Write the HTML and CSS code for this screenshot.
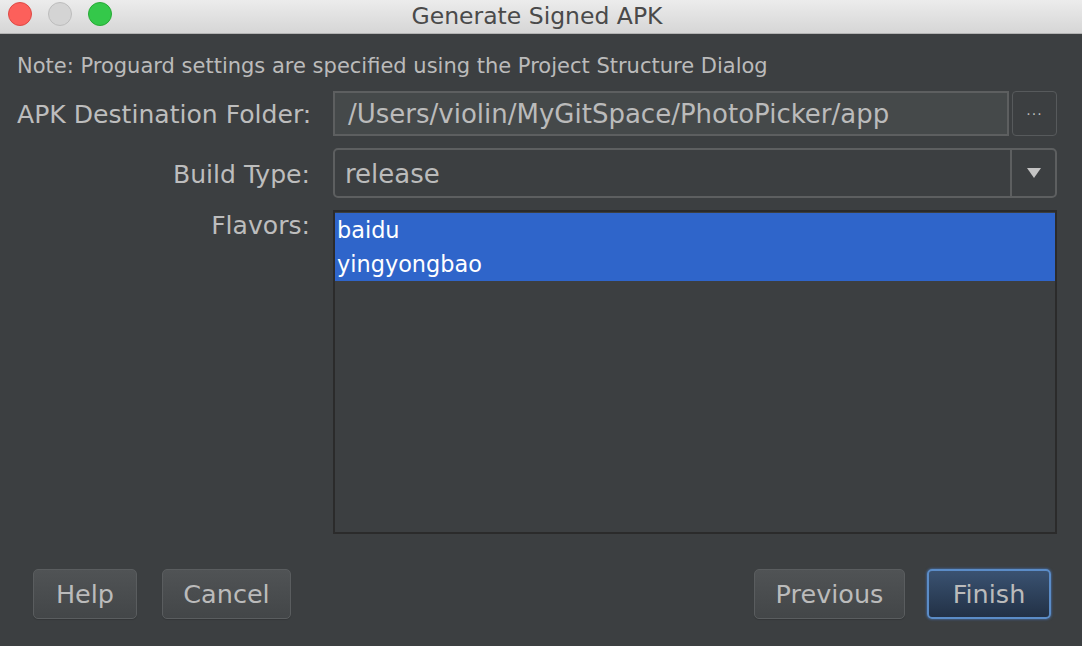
FILE: index.html
```html
<!DOCTYPE html>
<html>
<head>
<meta charset="utf-8">
<link rel="stylesheet" href="styles.css">
</head>
<body>
<div class="window">
  <div class="titlebar">
    <div class="lights">
      <span class="light red"></span>
      <span class="light gray"></span>
      <span class="light green"></span>
    </div>
    <div class="title">Generate Signed APK</div>
  </div>
  <div class="content">
    <div class="note">Note: Proguard settings are specified using the Project Structure Dialog</div>
    <div class="form">
      <label class="label">APK Destination Folder:</label>
      <div class="pathrow">
        <div class="textfield">/Users/violin/MyGitSpace/PhotoPicker/app</div>
        <div class="browse">&middot;&middot;&middot;</div>
      </div>
      <label class="label">Build Type:</label>
      <div class="combo">
        <div class="combo-value">release</div>
        <div class="combo-arrow"><svg width="16" height="12" viewBox="0 0 16 12"><path d="M1 1 H15 L8 11 Z" fill="#c4c4c4"/></svg></div>
      </div>
      <label class="label label-top">Flavors:</label>
      <div class="list">
        <div class="item sel">baidu</div>
        <div class="item sel">yingyongbao</div>
      </div>
    </div>
    <div class="buttons">
      <div class="group">
        <button class="btn help">Help</button>
        <button class="btn cancel">Cancel</button>
      </div>
      <div class="group right">
        <button class="btn prev">Previous</button>
        <button class="btn finish">Finish</button>
      </div>
    </div>
  </div>
</div>
</body>
</html>
```
FILE: styles.css
```css
html, body {
  margin: 0;
  padding: 0;
}
body {
  width: 1082px;
  height: 646px;
  overflow: hidden;
  background: #3c3f41;
  font-family: "DejaVu Sans", "Liberation Sans", sans-serif;
  color: #bbbbbb;
}
.window {
  display: flex;
  flex-direction: column;
  height: 646px;
}
.titlebar {
  height: 34px;
  flex: none;
  background: linear-gradient(#ececec, #d6d6d6);
  border-bottom: 1px solid #b3b3b3;
  box-sizing: border-box;
  position: relative;
  display: flex;
  align-items: center;
  justify-content: center;
}
.lights {
  position: absolute;
  left: 8px;
  top: 2px;
  display: flex;
  gap: 16px;
}
.light {
  width: 24px;
  height: 24px;
  border-radius: 50%;
  box-sizing: border-box;
}
.red { background: #fc605b; border: 1px solid #de4a45; }
.gray { background: #d4d4d4; border: 1px solid #bdbdbd; }
.green { background: #34c84a; border: 1px solid #27aa35; }
.title {
  font-size: 23.5px;
  color: #4a4a4a;
  margin-top: -2px;
  margin-left: -8px;
}
.content {
  flex: 1;
  padding: 0 25px 0 17px;
  display: flex;
  flex-direction: column;
}
.note {
  font-size: 21px;
  line-height: 24px;
  margin-top: 20px;
  color: #bbbbbb;
  white-space: nowrap;
}
.form {
  margin-top: 13px;
  display: grid;
  grid-template-columns: 293px 1fr;
  column-gap: 23px;
  row-gap: 12px;
  align-items: center;
}
.label {
  font-size: 25.1px;
  text-align: right;
  color: #bdbdbd;
  white-space: nowrap;
  margin-top: 2px;
}
.label-top {
  align-self: start;
  line-height: 30px;
  margin-top: 1px;
}
.pathrow {
  display: flex;
  gap: 3px;
  height: 45px;
}
.textfield {
  flex: 1;
  background: #45494a;
  border: 2px solid #5d5f60;
  box-sizing: border-box;
  font-size: 26px;
  line-height: 43px;
  padding-left: 13px;
  color: #bbbbbb;
  white-space: nowrap;
}
.browse {
  width: 45px;
  box-sizing: border-box;
  border: 1px solid #575a5c;
  border-radius: 4px;
  background: #3c3f41;
  text-align: center;
  font-size: 14px;
  line-height: 44px;
  letter-spacing: 1px;
  color: #bbbbbb;
}
.combo {
  height: 50px;
  box-sizing: border-box;
  border: 2px solid #5d5f60;
  border-radius: 5px;
  display: flex;
  background: #3c3f41;
}
.combo-value {
  flex: 1;
  font-size: 26px;
  line-height: 48px;
  padding-left: 10px;
}
.combo-arrow {
  width: 43px;
  border-left: 2px solid #5d5f60;
  display: flex;
  align-items: center;
  justify-content: center;
}
.list {
  height: 324px;
  box-sizing: border-box;
  border: 2px solid #2b2b2b;
  background: #3c3f41;
  padding-top: 1px;
}
.item {
  font-size: 22.4px;
  line-height: 34px;
  height: 34px;
  padding-left: 2px;
  color: #ffffff;
}
.item.sel {
  background: #2f65ca;
}
.buttons {
  margin-top: 35px;
  display: flex;
  justify-content: space-between;
  padding-left: 16px;
  padding-right: 6px;
}
.group {
  display: flex;
  gap: 25px;
}
.group.right {
  gap: 22px;
}
.btn {
  height: 50px;
  box-sizing: border-box;
  border: 1px solid #5a5d5f;
  border-radius: 5px;
  background: linear-gradient(#505355, #434648);
  color: #bbbbbb;
  font-family: "DejaVu Sans", "Liberation Sans", sans-serif;
  font-size: 25.5px;
  padding: 0;
  box-shadow: 0 1px 1px rgba(0,0,0,0.15);
}
.help { width: 104px; }
.cancel { width: 129px; }
.prev { width: 151px; }
.finish {
  width: 124px;
  background: linear-gradient(#3a5271, #223146);
  border: 2px solid #5b8cc7;
  box-shadow: 0 0 2px 1px rgba(70,120,190,0.5);
}
```
